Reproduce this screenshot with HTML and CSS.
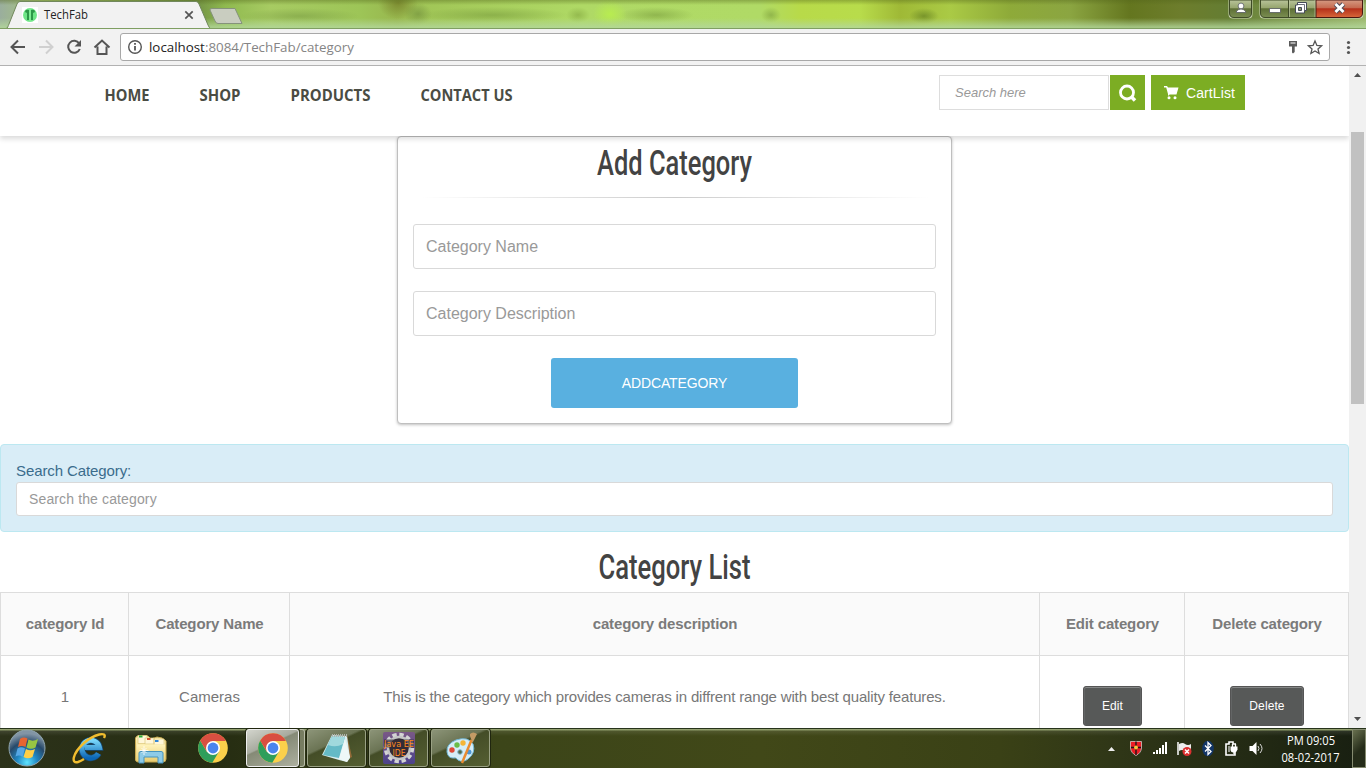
FILE: index.html
```html
<!DOCTYPE html>
<html lang="en">
<head>
<meta charset="utf-8">
<title>TechFab</title>
<link rel="stylesheet" href="styles.css">
</head>
<body>
<svg class="defs" width="0" height="0" aria-hidden="true">
  <defs>
    <symbol id="chrome" viewBox="0 0 30 30">
      <circle cx="15" cy="15" r="14.8" fill="#fbd04b"/>
      <path d="M2.200 7.500A14.800 14.800 0 0 0 14.300 29.800L21 18.500 15 15 8.800 18.700z" fill="#2f9e5b"/>
      <path d="M2.200 7.500 8.900 18.800 15 8h12.900A14.800 14.800 0 0 0 2.200 7.500z" fill="#d94f41"/>
      <circle cx="15" cy="15" r="7" fill="#fff"/>
      <circle cx="15" cy="15" r="5.400" fill="#4a84ee"/>
    </symbol>
  </defs>
</svg>
<div class="screen">
  <header class="titlebar">
    <div class="glass"></div>
    <svg class="tab" width="246" height="29" viewBox="0 0 246 29">
      <path d="M5.500 29C8 28 8 26 9 24L17 4Q18 1.500 20 1.500H196Q198 1.500 199 4L208 25Q209.500 28.500 211 29z" fill="#f2f2f2" stroke="#71885c"/>
      <path d="M212 8.500H235L242 23.500H218Q216 23.500 215 21L210 10Q209.500 8.500 212 8.500z" fill="#c9cdc0" stroke="#85937b"/>
      <rect x="22" y="7" width="16" height="16" fill="#fff"/>
      <circle cx="30" cy="15" r="7" fill="#6ee586"/>
      <path d="M25 12Q25 9 29 10V20H27V13zM35 12Q35 9 31 10V20H33V13z" fill="#2c9847"/>
      <path d="M30 8v14" stroke="#8df49f"/>
      <text x="44" y="19" textLength="44" lengthAdjust="spacingAndGlyphs" class="tab-title">TechFab</text>
      <path d="M185.300 11.300l7.400 7.400M192.700 11.300l-7.400 7.400" stroke="#555" stroke-width="1.700"/>
    </svg>
    <svg class="window-buttons" width="138" height="20" viewBox="0 0 138 20">
      <defs>
        <linearGradient id="btn" x1="0" y1="0" x2="0" y2="1"><stop offset="0" stop-color="#b8c39a"/><stop offset=".45" stop-color="#96a56e"/><stop offset=".5" stop-color="#5e6f36"/><stop offset="1" stop-color="#7b8e52"/></linearGradient>
        <linearGradient id="close" x1="0" y1="0" x2="0" y2="1"><stop offset="0" stop-color="#d59a83"/><stop offset=".45" stop-color="#c56a50"/><stop offset=".5" stop-color="#b5301a"/><stop offset="1" stop-color="#d8683a"/></linearGradient>
      </defs>
      <path d="M.5 0V14Q.5 18.500 5 18.500H20Q24.500 18.500 24.500 14V0z" fill="#cbd5b5"/>
      <path d="M1.500 0V13Q1.500 17.500 6 17.500H19Q23.500 17.500 23.500 13V0z" fill="url(#btn)" stroke="#3e4a27"/>
      <path d="M31.500 0V14Q31.500 18.500 36 18.500H131Q135.500 18.500 135.500 14V0z" fill="#cbd5b5"/>
      <path d="M32.500 0V13Q32.500 17.500 37 17.500H88V0z" fill="url(#btn)" stroke="#3e4a27"/>
      <path d="M88 0V17.500H130Q134.500 17.500 134.500 13V0z" fill="url(#close)" stroke="#4a1710"/>
      <path d="M60.500 0V17" stroke="#3e4a27"/><path d="M61.500 0V17M87 0V17" stroke="#bfcaa5" stroke-width=".7"/>
      <g fill="#fff" stroke="#555b60" stroke-width=".8"><circle cx="13" cy="6" r="2.900"/><path d="M8.500 12.500V11Q13 7 17.500 11v1.500z"/><path d="M41.500 8.500h11v4h-11z"/></g>
      <path d="M69.500 2.500h9v8h-2v2.500h-9v-8h2z" fill="#fff" stroke="#454b58"/>
      <path d="M70 4.500h6.500v6" fill="none" stroke="#454b58" stroke-width=".8"/>
      <path d="M70.500 7.500h3v3h-3z" fill="#8b986b" stroke="#454b58"/>
      <path d="M107.500 4l8 8M115.500 4l-8 8" stroke="#514b58" stroke-width="4.800"/><path d="M107.500 4l8 8M115.500 4l-8 8" stroke="#fff" stroke-width="2.800"/>
    </svg>
  </header>

  <div class="toolbar">
    <svg class="nav-icons" width="120" height="36" viewBox="0 0 120 36" fill="none" stroke-width="2">
      <path d="M25 18H12M18 11.500 11.500 18l6.500 6.500" stroke="#555"/>
      <path d="M39 18h13M46 11.500l6.500 6.500-6.500 6.500" stroke="#d0d0d0"/>
      <path d="M79.200 14.500A6 6 0 1 0 79.800 20" stroke="#555"/><path d="M81 11v6.500h-6.500z" fill="#555"/>
      <path d="M94.500 18.500 102 11.500l7.500 7M97.500 17.500V25h9v-7.500" stroke="#555"/>
    </svg>
    <div class="address">
      <svg width="28" height="26" viewBox="0 0 28 26"><circle cx="14" cy="13" r="6.300" fill="none" stroke="#555" stroke-width="1.400"/><path d="M14 12v4.500M14 9v1.700" stroke="#555" stroke-width="1.800"/></svg>
      <svg class="url" width="220" height="26"><text x="0" y="17.500" textLength="205" lengthAdjust="spacingAndGlyphs"><tspan fill="#222">localhost</tspan><tspan fill="#858585">:8084/TechFab/category</tspan></text></svg>
      <svg class="address-actions" width="44" height="26" viewBox="0 0 44 26">
        <path d="M4 7h8v5.500H9.700V18L8 19.500 7 18.500V12.500H4z" fill="#5a5a5a"/><path d="M5.500 9h5" stroke="#fff"/>
        <path d="M30 7l1.900 4.400 4.700.4-3.600 3.100 1.100 4.600-4.100-2.500-4.100 2.500 1.100-4.600-3.600-3.100 4.700-.4z" fill="none" stroke="#555" stroke-width="1.300"/>
      </svg>
    </div>
    <svg class="menu" width="36" height="36"><g fill="#555"><circle cx="18.500" cy="13.500" r="1.600"/><circle cx="18.500" cy="18.500" r="1.600"/><circle cx="18.500" cy="23.500" r="1.600"/></g></svg>
  </div>

  <div class="viewport">
    <main class="page">
      <div class="site-header">
        <nav>
          <svg width="420" height="30" class="nav-text">
            <text x=".5" y="20" textLength="45" lengthAdjust="spacingAndGlyphs">HOME</text>
            <text x="95.500" y="20" textLength="41" lengthAdjust="spacingAndGlyphs">SHOP</text>
            <text x="186.500" y="20" textLength="80" lengthAdjust="spacingAndGlyphs">PRODUCTS</text>
            <text x="316.500" y="20" textLength="92" lengthAdjust="spacingAndGlyphs">CONTACT US</text>
          </svg>
        </nav>
        <div class="shop-tools">
          <div class="search-box">Search here</div>
          <div class="search-button"><svg width="35" height="35" fill="none" stroke="#fff"><circle cx="17" cy="17.500" r="6.500" stroke-width="2.800"/><path d="M21 21.500l4 4" stroke-width="3.500"/></svg></div>
          <div class="cart"><svg width="15" height="15" viewBox="0 0 15 15"><path d="M0 1h3l1 1.500h10.500L12.500 9.500H5.500L5 10.500H4L4 9 2.200 2.500H0z" fill="#fff"/><circle cx="5" cy="12.800" r="1.500" fill="#fff"/><circle cx="11" cy="12.800" r="1.500" fill="#fff"/></svg><span>CartList</span></div>
        </div>
      </div>

      <section class="card">
        <h2><svg width="160" height="48"><text x="2" y="37.500" textLength="155" lengthAdjust="spacingAndGlyphs">Add Category</text></svg></h2>
        <div class="rule"></div>
        <div class="field">Category Name</div>
        <div class="field">Category Description</div>
        <div class="submit">ADDCATEGORY</div>
      </section>

      <section class="alert">
        <label>Search Category:</label>
        <div class="filter">Search the category</div>
      </section>

      <h2 class="list-title"><svg width="160" height="48"><text x="3.500" y="37" textLength="152" lengthAdjust="spacingAndGlyphs">Category List</text></svg></h2>
      <table>
        <colgroup><col class="c-id"><col class="c-name"><col class="c-desc"><col class="c-edit"><col class="c-delete"></colgroup>
        <thead><tr><th>category Id</th><th>Category Name</th><th>category description</th><th>Edit category</th><th>Delete category</th></tr></thead>
        <tbody><tr><td>1</td><td>Cameras</td><td class="description">This is the category which provides cameras in diffrent range with best quality features.</td><td class="action"><span class="btn">Edit</span></td><td class="action"><span class="btn">Delete</span></td></tr></tbody>
      </table>
    </main>
    <aside class="scrollbar">
      <svg width="17" height="17"><path d="M5 11l3.500-4L12 11z" fill="#505050"/></svg>
      <div class="thumb"></div>
      <svg class="down" width="17" height="17"><path d="M5 6h7l-3.500 4z" fill="#505050"/></svg>
    </aside>
  </div>

  <footer class="taskbar">
    <svg class="launchers" width="240" height="40" viewBox="0 0 240 40">
      <defs>
        <radialGradient id="orb" cx=".5" cy=".9" r=".8"><stop offset="0" stop-color="#5fe4ff"/><stop offset=".35" stop-color="#2188c4"/><stop offset=".7" stop-color="#27496a"/><stop offset="1" stop-color="#8295a5"/></radialGradient>
        <linearGradient id="ie" x1="0" y1="0" x2="0" y2="1"><stop offset="0" stop-color="#7ad7fa"/><stop offset="1" stop-color="#0b66b5"/></linearGradient>
        <linearGradient id="folder" x1="0" y1="0" x2="0" y2="1"><stop offset="0" stop-color="#fff4bd"/><stop offset="1" stop-color="#e9ce73"/></linearGradient>
      </defs>
      <circle cx="27" cy="20" r="18" fill="url(#orb)" stroke="#91a6ae"/>
      <path d="M20 11Q23.500 8.500 27.500 10.500L25.500 19Q22 17 18 19z" fill="#e66532"/>
      <path d="M28.500 11.500Q33 14 38 11L35.500 19.500Q31 22 26.500 19.500z" fill="#97c543"/>
      <path d="M17.500 20.500Q21 18 25 20.500L22.500 29Q19.500 26.500 15.500 28.500z" fill="#56a7e5"/>
      <path d="M26 21Q30 23.500 35 21L32.500 29Q28 31.500 23.500 29z" fill="#ffcf47"/>
      <path d="M98.500 25.500A8.800 8.800 0 1 1 99.500 19.500H86" fill="none" stroke="#174c7a" stroke-width="6.500"/>
      <path d="M98.500 25.500A8.800 8.800 0 1 1 99.500 19.500H85" fill="none" stroke="url(#ie)" stroke-width="5"/>
      <path d="M104 10C108 3 94 6 84 15C72 26 71 36 78 34Q81 33 84 31" fill="none" stroke="#f1bd2f" stroke-width="2.400"/>
      <path d="M135.500 10V32Q136 34 138 34H163Q166 34 166 31V13L162 10 157 9 151 11 148 8H137z" fill="url(#folder)" stroke="#c6a951"/>
      <path d="M138 7.500h9v8h-9z" fill="#fff7d9" stroke="#ddc87c" stroke-width=".7"/>
      <path d="M145 10h9v6h-9zM154 11h10v6h-10z" fill="#fff7d9" stroke="#ddc87c" stroke-width=".7"/>
      <path d="M139 7.500h3.500v2H139z" fill="#2aab3c"/><path d="M147 10h3.500v2H147z" fill="#d65434"/><path d="M155 12h3.500v2H155z" fill="#3287d7"/>
      <path d="M137 16.500H165V33H137z" fill="url(#folder)"/>
      <path d="M139 35V25Q139 23.500 141 23.500H161Q163 23.500 163 25V35H158V29H144V35z" fill="#8ecbe8" stroke="#4694bf"/>
      <path d="M144 18v9M139.500 22.500h9M141.500 20l5 5M146.500 20l-5 5" stroke="#fff" stroke-width=".8"/>
      <use href="#chrome" x="198" y="5" width="30" height="30"/>
    </svg>
    <div class="task active"><svg width="30" height="30"><use href="#chrome" width="30" height="30"/></svg></div>
    <div class="stack-edge"></div>
    <div class="task"><svg width="32" height="32" viewBox="0 0 32 32"><path d="M26 3l5 22-4 2z" fill="#946b38"/><path d="M11 3l15 1 3 22-3 4-8-2-17-5z" fill="#d9eef0"/><path d="M11 4l13 1-6 21-16-3z" fill="#65bac6"/><path d="M11 4l13 1-2 7Q15 16 7 13z" fill="#a0d9dd"/><path d="M24 7l-6 20 8 3 3-5z" fill="#eef7f7"/><path d="M11 3.500h16" stroke="#b0b5ae" stroke-width="3" stroke-dasharray="1 1"/></svg></div>
    <div class="task"><svg class="java" width="32" height="32" viewBox="0 0 32 32"><defs><linearGradient id="java" x2="0" y2="1"><stop stop-color="#795886"/><stop offset="1" stop-color="#4c428b"/></linearGradient></defs><rect width="32" height="32" rx="2" fill="url(#java)"/><circle cx="16" cy="16" r="13" fill="none" stroke="#d3d4d4" stroke-width="4.500" stroke-dasharray="4.200 2.600"/><circle cx="16" cy="16" r="11" fill="#332c36" stroke="#c4c5c5" stroke-width="2.500"/><path d="M1 7.500h30v8H1z" fill="#332c36" fill-opacity=".7"/><g class="java-text"><text x="1" y="15" textLength="30" lengthAdjust="spacingAndGlyphs">Java EE</text><text x="9.500" y="23.500" textLength="13" lengthAdjust="spacingAndGlyphs">IDE</text></g></svg></div>
    <div class="task"><svg width="32" height="32" viewBox="0 0 32 32"><path d="M2 20Q1 12 11 8 23 4 28 12 31 21 23 27 18 31 13 28 11 25 8 26 3 26 2 20z" fill="#d5edf7" stroke="#72b8d8"/><circle cx="15" cy="20" r="2.300" fill="#536947" stroke="#82b6cc"/><circle cx="7" cy="18" r="2.700" fill="#df4938"/><circle cx="12" cy="13" r="2.700" fill="#6bbd48"/><circle cx="18" cy="11" r="2.700" fill="#f5b536"/><circle cx="24" cy="20" r="2.500" fill="#4d96d6"/><path d="M26.500 8 17 31" stroke="#e98b30" stroke-width="2.500"/><path d="M25 4l2.500 7L32 2Q28-1 25 2z" fill="#c49b65"/></svg></div>
    <svg class="tray" width="168" height="40" viewBox="0 0 168 40">
      <path d="M8 23l3.500-4L15 23z" fill="#eee"/>
      <path d="M30.500 13.500H41.500V20Q41 25 36 27.500 31 25 30.500 20z" fill="#ed1c24" stroke="#ddd" stroke-width=".7"/><path d="M36 13.500V27M31 19.500h10" stroke="#1b1616" stroke-width="1.400"/><circle cx="36" cy="19.500" r="2" fill="#f6c43b"/>
      <g fill="#fff"><path d="M53 24h2v2h-2zM56 22h2v4h-2zM59 20h2v6h-2zM62 17h2v9h-2zM65 14h2v12h-2z"/></g>
      <path d="M78 14v13" stroke="#fff" stroke-width="1.500"/><path d="M79 16Q83 14 85 16q3 2 6 0v7q-4 2-6 0-3-2-6 0z" fill="#eee"/><circle cx="87" cy="23.500" r="4.500" fill="#dc3030"/><path d="M85 21.500l4 4m0-4-4 4" stroke="#fff" stroke-width="1.500"/>
      <ellipse cx="108" cy="20.500" rx="5.800" ry="7.800" fill="#123566"/><path d="M105 17.500l6 6-3 3v-12l3 3-6 6" fill="none" stroke="#fff" stroke-width="1.300"/>
      <path d="M135 27h-9V16h3v-2h4v2h3M132 27h3v-3" fill="none" stroke="#fff" stroke-width="1.600"/><path d="M130.500 18.500h7v3q-1 3-3 3h-1q-3 0-3-3z" fill="#fff"/><path d="M132.500 19v-3m3 3v-3M134 24v2" stroke="#fff" stroke-width="1.300"/><path d="M129 18v6" stroke="#fff"/>
      <path d="M149.500 18h3l4-4v13l-4-4h-3z" fill="#fff"/><path d="M158 18q2 2.500 0 5M160 16q4 4.500 0 9" fill="none" stroke="#ddd"/>
    </svg>
    <svg class="clock" width="62" height="40"><text x="7" y="17" textLength="48" lengthAdjust="spacingAndGlyphs">PM 09:05</text><text x="1.500" y="34" textLength="58" lengthAdjust="spacingAndGlyphs">08-02-2017</text></svg>
    <div class="show-desktop"></div>
  </footer>
</div>
</body>
</html>
```
FILE: styles.css
```css
* { box-sizing: border-box; }
body { margin: 0; overflow: hidden; font-family: "Liberation Sans", Arial, sans-serif; background: #fff; }
svg { display: block; flex: none; }
.defs { position: absolute; }
.screen { width: 1366px; height: 768px; display: flex; flex-direction: column; overflow: hidden; }

.titlebar { height: 29px; flex: none; position: relative; display: flex; justify-content: space-between; overflow: hidden; border-bottom: 1px solid #7f9f62; }
.glass {
  position: absolute; inset: 0;
  background:
    linear-gradient(180deg, #52641a66 0, transparent 5px, transparent 18px, #b3d79bcc 27px),
    radial-gradient(ellipse 14px 11px at 418px 14px, #718f3ca0, transparent),
    radial-gradient(ellipse 75px 8px at 493px 15px, #789b3d90, transparent),
    radial-gradient(ellipse 12px 8px at 578px 15px, #80a33d90, transparent),
    radial-gradient(ellipse 17px 14px at 610px 14px, #b8ec50, transparent),
    radial-gradient(ellipse 38px 8px at 656px 15px, #789b3d90, transparent),
    radial-gradient(ellipse 10px 8px at 771px 15px, #789b3d90, transparent),
    radial-gradient(ellipse 15px 8px at 924px 16px, #5f7b20a0, transparent),
    radial-gradient(ellipse 60px 8px at 300px 16px, #7a9d4490, transparent),
    radial-gradient(ellipse 20px 16px at 398px 3px, #7d8c31, transparent),
    linear-gradient(90deg, #9aae9d 0, #a9c874 40px, #719044 195px, #8fb94f 225px, #a7cb62 270px, #9dc557 360px, #98b74e 397px, #a1c657 425px, #afd965 580px, #b0da66 760px, #b8da49 800px, #b8dc4b 860px, #9fb936 900px, #aaca45 950px, #8eaa39 1010px, #8ba541 1070px, #64761f 1130px, #6d7d2c 1180px, #647d33 1230px, #9cb66b 1366px);
}
.tab { position: relative; }
.tab-title { font: 12px "Open Sans", sans-serif; fill: #222; }
.window-buttons { position: relative; }

.toolbar { height: 37px; flex: none; display: flex; align-items: flex-start; background: #f2f2f2; border-bottom: 1px solid #b2b2b2; }
.address { flex: 1; height: 28px; margin-top: 4px; display: flex; background: #fff; border: 1px solid #a8a8a8; border-radius: 3px; }
.url { font: 13.500px "Open Sans", sans-serif; }
.address-actions { margin-left: auto; }

.viewport { height: 662px; flex: none; display: flex; overflow: hidden; }
.page { width: 1349px; height: 662px; overflow: hidden; display: flex; flex-direction: column; align-items: center; }
.site-header { width: 100%; height: 70px; flex: none; display: flex; justify-content: space-between; padding: 9px 104px 0 104px; background: #fff; box-shadow: 0 3px 5px #00000024; position: relative; z-index: 1; }
.nav-text { margin-top: 6px; font: 700 16.5px "Open Sans", sans-serif; fill: #4a4c43; }
.shop-tools { display: flex; align-items: flex-start; }
.search-box { width: 170px; height: 35px; border: 1px solid #ddd; padding-left: 15px; font: italic 13px/34px "Liberation Sans", sans-serif; color: #999; }
.search-button { width: 35px; height: 35px; margin: 0 6px 0 1px; background: #7cad23; }
.cart { width: 94px; height: 35px; display: flex; align-items: center; gap: 7px; padding-left: 13px; background: #7cad23; color: #fff; font-size: 14px; line-height: 35px; white-space: nowrap; }
.cart span { padding-top: 1px; letter-spacing: .1px; }

.card { width: 555px; height: 288px; flex: none; padding: 0 15px; border: 1px solid #bfbfbf; border-radius: 4px; box-shadow: 0 1px 3px #00000040; display: flex; flex-direction: column; align-items: center; background: #fff; }
h2 { margin: 0; height: 48px; flex: none; font: 500 35px Roboto, sans-serif; fill: #434343; }
h2 svg { overflow: visible; }
.rule { width: 508px; height: 1px; flex: none; margin: 12px 0 26px; background: linear-gradient(90deg, transparent, #ccc, transparent); }
.field { width: 523px; height: 45px; flex: none; margin-bottom: 22px; padding-left: 12px; border: 1px solid #d9d9d9; border-radius: 3px; color: #999; font-size: 16px; line-height: 43px; }
.submit { width: 247px; height: 50px; flex: none; border-radius: 3px; background: #59b0e0; color: #fff; font-size: 14px; line-height: 50px; letter-spacing: -.12px; text-align: center; }

.alert { width: 1349px; height: 88px; flex: none; margin-top: 20px; padding: 15px; border: 1px solid #bce8f1; border-radius: 4px; background: #d9edf7; color: #3a6c8c; }
.alert label { display: block; height: 22px; font-size: 15px; line-height: 22px; letter-spacing: -.1px; }
.filter { height: 34px; padding-left: 12px; border: 1px solid #d9d9d9; border-radius: 3px; background: #fff; color: #999; font-size: 14px; line-height: 32px; letter-spacing: .13px; }
.list-title { margin-top: 10px; height: 50px; }
table { width: 1349px; flex: none; table-layout: fixed; border-collapse: separate; border-spacing: 0; border-left: 1px solid #ddd; border-top: 1px solid #ddd; color: #777; font-size: 15px; }
.c-id { width: 128px; } .c-name { width: 161px; } .c-desc { width: 750px; } .c-edit { width: 145px; } .c-delete { width: 164px; }
th, td { padding: 0 0 2px 1px; border-right: 1px solid #ddd; border-bottom: 1px solid #ddd; text-align: center; vertical-align: middle; }
th { height: 63px; background: #fafafa; letter-spacing: -.15px; color: #7b7b7b; }
td { height: 84px; }
.description { padding-left: 0; letter-spacing: -.16px; }
td.action { vertical-align: top; padding-top: 30px; }
.btn { display: inline-block; height: 40px; padding: 0 18px; border: 1px solid #555; border-radius: 3px; background: #575958; box-shadow: inset 0 1px #858787, inset 1px 0 #636565, inset -1px 0 #636565; color: #fff; font-size: 12px; line-height: 38px; letter-spacing: .1px; vertical-align: top; }

.scrollbar { width: 17px; height: 662px; background: #f1f1f1; display: flex; flex-direction: column; align-items: center; }
.thumb { width: 13px; height: 272px; margin-top: 49px; background: #c1c1c1; }
.down { margin-top: auto; }

.taskbar { height: 40px; flex: none; display: flex; align-items: flex-start; background: linear-gradient(180deg, #27331b 0, #27331b 1px, #9ba878 1px, #8b9966 2px, #ffffff18 3px, transparent 8px), linear-gradient(90deg, #2c321a, #262d12 220px, #3c4519 500px, #414818 760px, #3a4116 1000px, #303717 1110px, #181f11); }
.launchers { margin-right: 6px; }
.task { width: 59px; height: 38px; flex: none; margin: 1px 3px 0 0; display: flex; align-items: center; justify-content: center; border: 1px solid #9aa184; border-radius: 3px; background: linear-gradient(155deg, #8c9478 0, #6b7454 38%, #444d27 42%, #555f32 100%); box-shadow: 0 0 0 1px #20260f; }
.active { width: 53px; margin-right: 0; border-color: #eee; background: linear-gradient(155deg, #d3d5cd 0, #a7aa9e 40%, #858a76 43%, #adb09f 100%); }
.stack-edge { width: 6px; height: 38px; margin: 1px 2px 0 0; flex: none; border: 1px solid #b9bda9; border-left-color: #2c3218; border-radius: 0 3px 3px 0; background: #777d61; }
.java { overflow: visible; }
.java-text { font: 8.500px "DejaVu Sans", sans-serif; fill: #ff8b20; }
.tray { margin-left: auto; }
.clock { overflow: visible; margin: 0 10px 0 12px; font: 12px "Open Sans", sans-serif; fill: #fff; }
.show-desktop { width: 14px; height: 39px; margin-top: 1px; border: 1px solid #858b70; background: linear-gradient(135deg, #68704f, #252c19 55%); }
```
